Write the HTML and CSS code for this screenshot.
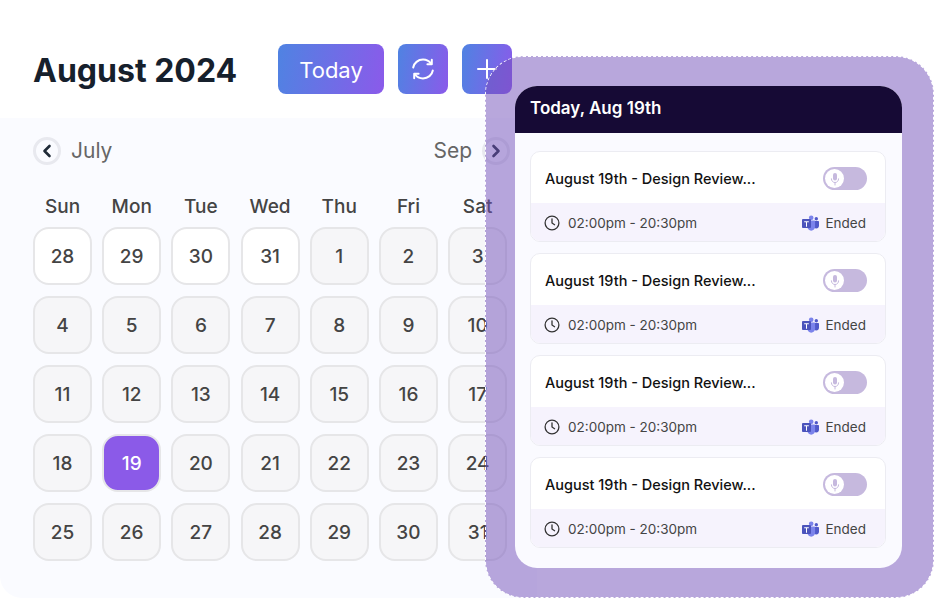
FILE: index.html
```html
<!DOCTYPE html>
<html lang="en">
<head>
  <meta charset="UTF-8" />
  <title>Calendar</title>
  <link rel="stylesheet" href="styles.css">
</head>
<body>
  <svg class="defs" width="0" height="0">
    <symbol id="clock" viewBox="0 0 16 16">
      <circle cx="8" cy="8" r="6.900" fill="none" stroke="#333" stroke-width="1.300"/>
      <path d="M8 3.800V8l2.600 1.700" fill="none" stroke="#333" stroke-width="1.300" stroke-linecap="round" stroke-linejoin="round"/>
    </symbol>
    <symbol id="teams" viewBox="0 0 17 16">
      <circle cx="9.200" cy="2.800" r="2.300" fill="#7b83eb"/>
      <circle cx="14.300" cy="3.700" r="1.700" fill="#5059c9"/>
      <path d="M12 6h4.400c.3 0 .6.3.6.6v4.200c0 1.600-1.200 2.700-2.600 2.700-.9 0-1.800-.4-2.400-1z" fill="#5059c9"/>
      <path d="M5.500 5.600h7c.4 0 .6.3.6.6v5.600c0 2.200-1.700 3.900-3.900 3.900-2.100 0-3.700-1.500-3.700-3.600z" fill="#7b83eb"/>
      <rect x="0" y="4" width="9" height="9" rx=".9" fill="#4b53bc"/>
      <path d="M2.200 6.200h4.600v1H5v4.500H4V7.200H2.200z" fill="#fff"/>
    </symbol>
    <symbol id="mic" viewBox="0 0 12 14">
      <rect x="4" y="1" width="4" height="7.600" rx="2" fill="#c6b9de"/>
      <path d="M2.400 6.800c0 2.200 1.600 3.700 3.600 3.700s3.600-1.500 3.600-3.700M6 10.500V13" fill="none" stroke="#c6b9de" stroke-width="1" stroke-linecap="round"/>
    </symbol>
  </svg>

  <div class="page">
    <!-- Title and action buttons -->
    <header class="top">
      <h1 class="title">August 2024</h1>
      <div class="actions">
        <button class="btn btn-today">Today</button>
        <button class="btn btn-icon">
          <svg width="26" height="26" viewBox="0 0 26 26" fill="none" stroke="#fff" stroke-width="2" stroke-linecap="round" stroke-linejoin="round">
            <path d="M3.200 11.500C4 7 8 3.600 13 3.600c3.400 0 6.300 1.600 8 4.200"/>
            <path d="M22.800 14.500C22 19 18 22.400 13 22.400c-3.400 0-6.300-1.600-8-4.200"/>
            <path d="M21.800 3.800v4.400h-4.400"/>
            <path d="M4.200 22.200v-4.400h4.400"/>
          </svg>
        </button>
        <button class="btn btn-icon">
          <svg width="22" height="22" viewBox="0 0 22 22" fill="none" stroke="#fff" stroke-width="2" stroke-linecap="round">
            <path d="M11 2v18M2 11h18"/>
          </svg>
        </button>
      </div>
    </header>

    <!-- Month grid -->
    <section class="panel">
      <div class="month-nav">
        <div class="nav-side">
          <span class="nav-arrow">
            <svg width="10" height="14" viewBox="0 0 10 14" fill="none" stroke="#1f2a37" stroke-width="2.600" stroke-linecap="round" stroke-linejoin="round"><path d="M7.500 2 2.500 7l5 5"/></svg>
          </span>
          <span class="nav-label">July</span>
        </div>
        <div class="nav-side">
          <span class="nav-label">Sep</span>
          <span class="nav-arrow">
            <svg width="10" height="14" viewBox="0 0 10 14" fill="none" stroke="#1f2a37" stroke-width="2.600" stroke-linecap="round" stroke-linejoin="round"><path d="m2.500 2 5 5-5 5"/></svg>
          </span>
        </div>
      </div>

      <div class="weekdays">
        <span>Sun</span><span>Mon</span><span>Tue</span><span>Wed</span><span>Thu</span><span>Fri</span><span>Sat</span>
      </div>

      <div class="days">
        <div class="day prev">28</div><div class="day prev">29</div><div class="day prev">30</div><div class="day prev">31</div><div class="day">1</div><div class="day">2</div><div class="day">3</div>
        <div class="day">4</div><div class="day">5</div><div class="day">6</div><div class="day">7</div><div class="day">8</div><div class="day">9</div><div class="day">10</div>
        <div class="day">11</div><div class="day">12</div><div class="day">13</div><div class="day">14</div><div class="day">15</div><div class="day">16</div><div class="day">17</div>
        <div class="day">18</div><div class="day active">19</div><div class="day">20</div><div class="day">21</div><div class="day">22</div><div class="day">23</div><div class="day">24</div>
        <div class="day">25</div><div class="day">26</div><div class="day">27</div><div class="day">28</div><div class="day">29</div><div class="day">30</div><div class="day">31</div>
      </div>
    </section>
  </div>

  <!-- Purple selection box over the calendar -->
  <aside class="overlay">
    <div class="today-box">
      <div class="today-head">Today, Aug 19th</div>
      <div class="meetings">

        <div class="meeting">
          <div class="meeting-top">
            <span class="meeting-name">August 19th - Design Review...</span>
            <span class="toggle"><span class="knob"><svg width="12" height="14"><use href="#mic"/></svg></span></span>
          </div>
          <div class="meeting-foot">
            <svg class="clock" width="16" height="16"><use href="#clock"/></svg>
            <span class="meeting-time">02:00pm - 20:30pm</span>
            <svg class="teams" width="17" height="16"><use href="#teams"/></svg>
            <span class="meeting-state">Ended</span>
          </div>
        </div>

        <div class="meeting">
          <div class="meeting-top">
            <span class="meeting-name">August 19th - Design Review...</span>
            <span class="toggle"><span class="knob"><svg width="12" height="14"><use href="#mic"/></svg></span></span>
          </div>
          <div class="meeting-foot">
            <svg class="clock" width="16" height="16"><use href="#clock"/></svg>
            <span class="meeting-time">02:00pm - 20:30pm</span>
            <svg class="teams" width="17" height="16"><use href="#teams"/></svg>
            <span class="meeting-state">Ended</span>
          </div>
        </div>

        <div class="meeting">
          <div class="meeting-top">
            <span class="meeting-name">August 19th - Design Review...</span>
            <span class="toggle"><span class="knob"><svg width="12" height="14"><use href="#mic"/></svg></span></span>
          </div>
          <div class="meeting-foot">
            <svg class="clock" width="16" height="16"><use href="#clock"/></svg>
            <span class="meeting-time">02:00pm - 20:30pm</span>
            <svg class="teams" width="17" height="16"><use href="#teams"/></svg>
            <span class="meeting-state">Ended</span>
          </div>
        </div>

        <div class="meeting">
          <div class="meeting-top">
            <span class="meeting-name">August 19th - Design Review...</span>
            <span class="toggle"><span class="knob"><svg width="12" height="14"><use href="#mic"/></svg></span></span>
          </div>
          <div class="meeting-foot">
            <svg class="clock" width="16" height="16"><use href="#clock"/></svg>
            <span class="meeting-time">02:00pm - 20:30pm</span>
            <svg class="teams" width="17" height="16"><use href="#teams"/></svg>
            <span class="meeting-state">Ended</span>
          </div>
        </div>

      </div>
    </div>
  </aside>
</body>
</html>
```

FILE: styles.css
```css
html, body {
  margin: 0;
  padding: 0;
  height: 100%;
  overflow: hidden;
  background: #fff;
}

body {
  position: relative;
  font-family: 'Inter', 'Liberation Sans', sans-serif;
  color: #444;
}

.defs {
  position: absolute;
}

.page {
  width: 537px;
  height: 598px;
  display: flex;
  flex-direction: column;
}

/* Title row */
.top {
  height: 118px;
  box-sizing: border-box;
  padding: 44px 0 0 33px;
  display: flex;
  align-items: flex-start;
}

.title {
  margin: 0;
  width: 245px;
  height: 50px;
  line-height: 54px;
  font-size: 32px;
  font-weight: 700;
  color: #16202c;
}

.actions {
  display: flex;
  gap: 14px;
}

.btn {
  height: 50px;
  border: none;
  padding: 2px 0 0;
  border-radius: 8px;
  color: #fff;
  background: linear-gradient(100deg, #4f83e2 0%, #8b5aea 100%);
  display: flex;
  align-items: center;
  justify-content: center;
}

.btn-today {
  width: 106px;
  font-family: inherit;
  font-size: 22px;
}

.btn-icon {
  width: 50px;
  padding: 0;
}

/* Calendar panel */
.panel {
  flex: 1;
  box-sizing: border-box;
  padding: 19px 30px 0 33px;
  background: #fafbff;
  border-radius: 0 0 0 22px;
}

.month-nav {
  width: 477px;
  height: 28px;
  display: flex;
  justify-content: space-between;
}

.nav-side {
  display: flex;
  align-items: center;
  gap: 10px;
}

.nav-arrow {
  width: 28px;
  height: 28px;
  box-sizing: border-box;
  border: 3px solid #e8e9ef;
  border-radius: 50%;
  display: flex;
  align-items: center;
  justify-content: center;
}

.nav-label {
  font-size: 21px;
  line-height: 26px;
  color: #666;
}

.weekdays {
  margin-top: 29px;
  height: 26px;
  display: grid;
  grid-template-columns: repeat(7, 59px);
  column-gap: 10.200px;
  text-align: center;
  font-size: 19px;
  line-height: 26px;
  font-weight: 500;
  color: #444;
}

.days {
  margin-top: 7px;
  display: grid;
  grid-template-columns: repeat(7, 59px);
  grid-auto-rows: 58px;
  gap: 11px 10.200px;
}

.day {
  box-sizing: border-box;
  border: 2px solid #e6e6e8;
  border-radius: 16px;
  background: #f6f6f8;
  font-size: 19px;
  font-weight: 500;
  color: #444;
  display: flex;
  align-items: center;
  justify-content: center;
}

.day.prev {
  background: #fff;
}

.day.active {
  background: #8b5ae8;
  color: #fff;
}

/* Translucent selection over the right side */
.overlay {
  position: absolute;
  left: 485px;
  top: 56px;
  width: 449px;
  height: 542px;
  box-sizing: border-box;
  padding: 29px 31px 29px 29px;
  border: 1px dashed #fff;
  border-radius: 38px;
  background: rgba(113, 80, 186, 0.5);
}

.today-box {
  height: 482px;
  border-radius: 22px;
  overflow: hidden;
  background: #fafaff;
}

.today-head {
  height: 47px;
  box-sizing: border-box;
  padding-left: 15px;
  background: #160a35;
  color: #fff;
  font-size: 17px;
  font-weight: 600;
  line-height: 44px;
}

.meetings {
  padding: 18px 16px 0 15px;
  display: flex;
  flex-direction: column;
  gap: 11px;
}

.meeting {
  height: 91px;
  box-sizing: border-box;
  border: 1.500px solid #ececf2;
  border-radius: 10px;
  overflow: hidden;
  background: #fff;
}

.meeting-top {
  height: 51px;
  box-sizing: border-box;
  padding: 2px 18px 0 14px;
  display: flex;
  align-items: center;
  justify-content: space-between;
}

.meeting-name {
  font-size: 14.500px;
  font-weight: 500;
  color: #111;
}

.toggle {
  width: 44px;
  height: 23px;
  box-sizing: border-box;
  padding: 2px;
  border-radius: 12px;
  background: #c6b9de;
}

.knob {
  width: 19px;
  height: 19px;
  border-radius: 50%;
  background: #fff;
  display: flex;
  align-items: center;
  justify-content: center;
}

.meeting-foot {
  height: 38px;
  box-sizing: border-box;
  padding: 2px 19px 0 13px;
  background: #f6f3fd;
  display: flex;
  align-items: center;
  font-size: 13.500px;
  color: #444;
}

.clock {
  margin-right: 8px;
}

.meeting-time {
  flex: 1;
}

.teams {
  margin-right: 7px;
}
```
